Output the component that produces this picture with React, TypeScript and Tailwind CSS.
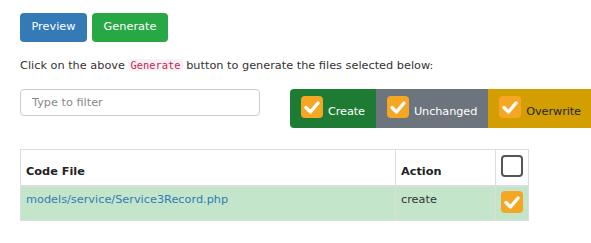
const FONT = { fontFamily: '"DejaVu Sans", "Liberation Sans", sans-serif' };

function Check({ on, className = '' }: { on: boolean; className?: string }) {
  if (!on) {
    return (
      <span className={`block w-[22px] h-[22px] rounded-[4px] border-2 border-[#555] bg-white shrink-0 ${className}`} />
    );
  }
  return (
    <span className={`flex items-center justify-center w-[22px] h-[22px] rounded-[4px] bg-[#f5a623] shrink-0 ${className}`}>
      <svg viewBox="0 0 22 22" className="w-[22px] h-[22px]">
        <polyline points="5,11.5 9.5,16 17,7" fill="none" stroke="white" strokeWidth="3.4" strokeLinecap="round" strokeLinejoin="round" />
      </svg>
    </span>
  );
}

const GROUP = [
  { label: 'Create', bg: 'bg-[#1e7b34]', text: 'text-white', round: 'rounded-l-[4px]' },
  { label: 'Unchanged', bg: 'bg-[#6c757d]', text: 'text-white', round: '' },
  { label: 'Overwrite', bg: 'bg-[#d39e00]', text: 'text-[#212529]', round: '' },
];

export default function App() {
  return (
    <div className="w-[591px] h-[243px] bg-white overflow-hidden text-[11.3px] text-[#333] px-[20px] pt-[13px]" style={FONT}>
      <div className="flex gap-[5px]">
        <button className="h-[29px] w-[67px] rounded-[4px] bg-[#337ab7] text-white">Preview</button>
        <button className="h-[29px] w-[76px] rounded-[4px] bg-[#28a745] text-white">Generate</button>
      </div>

      <p className="mt-[15px] leading-[16px]">
        Click on the above{' '}
        <code className="bg-[#f9f2f4] text-[#c7254e] px-[2px] text-[10.4px]" style={{ fontFamily: '"DejaVu Sans Mono", monospace' }}>
          Generate
        </code>{' '}
        button to generate the files selected below:
      </p>

      <div className="flex mt-[15px] gap-[30px]">
        <input
          placeholder="Type to filter"
          className="w-[240px] shrink-0 h-[27px] border border-[#ccc] rounded-[4px] px-[11px] text-[11.3px] placeholder:text-[#888] outline-none"
          style={FONT}
        />
        <div className="flex h-[39px] shrink-0">
          {GROUP.map((g) => (
            <div key={g.label} className={`flex items-end gap-[5px] pl-[11px] pr-[11px] pb-[9px] ${g.bg} ${g.text} ${g.round}`}>
              <Check on className="mb-[1px]" />
              <span className="leading-[14px] tracking-[-0.1px]">{g.label}</span>
            </div>
          ))}
        </div>
      </div>

      <table className="mt-[21px] w-[509px] border-collapse border border-[#ddd]">
        <thead>
          <tr className="border-b-2 border-[#ddd]">
            <th className="h-[36px] text-left align-bottom font-bold text-[#222] px-[5px] pb-[5px] leading-[16px]">Code File</th>
            <th className="w-[100px] text-left align-bottom font-bold text-[#222] px-[5px] pb-[5px] border-l border-[#ddd] leading-[16px]">Action</th>
            <th className="w-[32px] align-bottom px-[5px] pb-[8px] border-l border-[#ddd]">
              <Check on={false} />
            </th>
          </tr>
        </thead>
        <tbody>
          <tr className="bg-[#c3e6cb]">
            <td className="h-[35px] align-top px-[5px] pt-[5px] leading-[16px]">
              <a className="text-[#337ab7]">models/service/Service3Record.php</a>
            </td>
            <td className="align-top px-[5px] pt-[5px] border-l border-[#ddd] leading-[16px]">create</td>
            <td className="align-top px-[5px] pt-[4px] border-l border-[#ddd]">
              <Check on />
            </td>
          </tr>
        </tbody>
      </table>
    </div>
  );
}
